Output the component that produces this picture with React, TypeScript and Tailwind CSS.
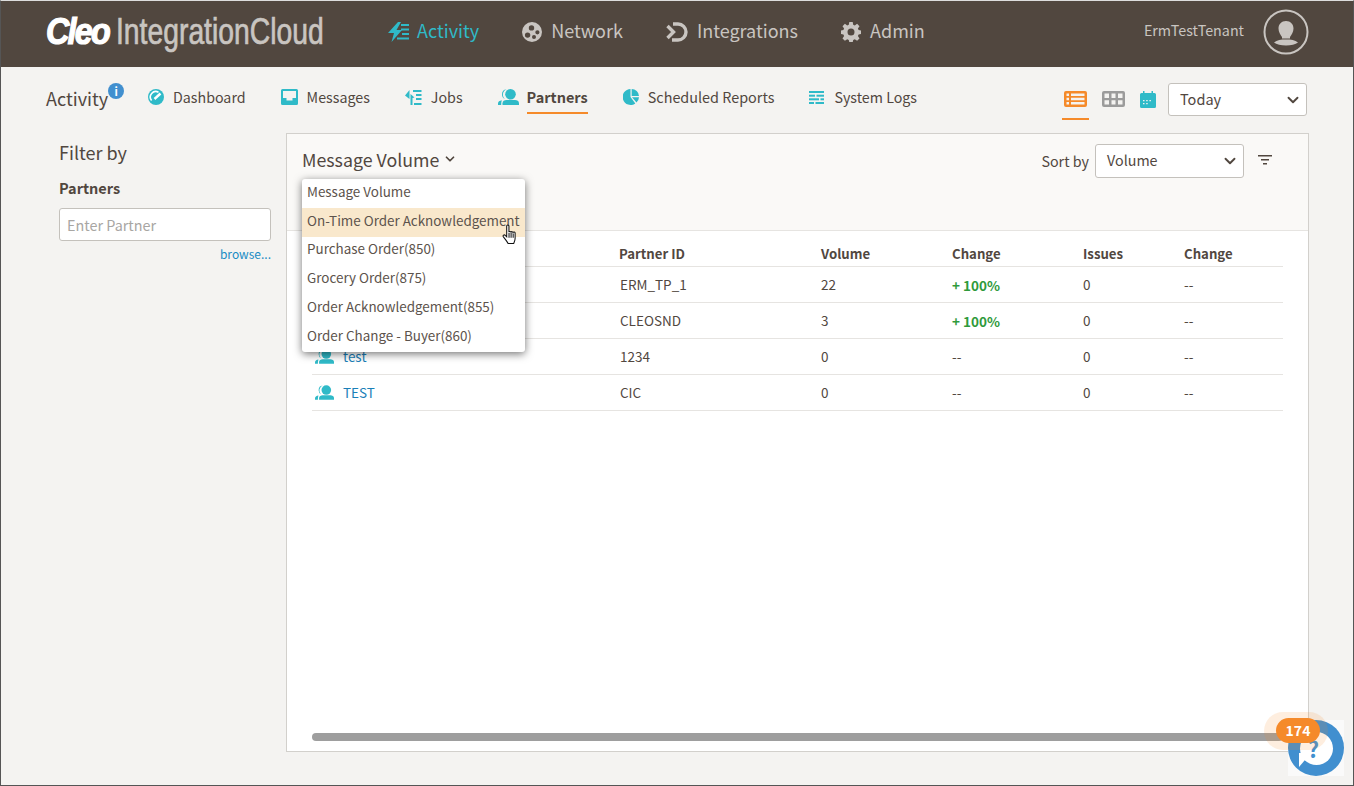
import React from 'react';
import { ChevronDown } from 'lucide-react';

const FONT = "font-['Noto_Sans_CJK_SC','Noto_Sans',sans-serif]";

const ActivityIcon = ({ className }: { className?: string }) => (
    <svg viewBox="0 0 21 20" className={className} fill="currentColor">
        <path d="M10 0 L0 11 H6 L3.500 20 L14 8 H8.500 L13 0 Z" />
        <rect x="13" y="2" width="8" height="2" />
        <rect x="13" y="6.500" width="8" height="2" />
        <rect x="14" y="11" width="7" height="2" />
        <rect x="9" y="15.500" width="12" height="2" />
    </svg>
);

const NetworkIcon = () => (
    <svg viewBox="0 0 20 20" className="w-5 h-5" fill="currentColor">
        <path fillRule="evenodd" d="M10 0a10 10 0 1 0 0 20 10 10 0 0 0 0-20ZM9.500 3.200a2.700 2.700 0 1 1 0 5.400 2.700 2.700 0 0 1 0-5.400ZM5.600 10.400a2.700 2.700 0 1 1 0 5.400 2.700 2.700 0 0 1 0-5.400ZM15.400 8.200a2.100 2.100 0 1 1 0 4.200 2.100 2.100 0 0 1 0-4.200ZM12 13a2 2 0 1 1 0 4 2 2 0 0 1 0-4Z" />
    </svg>
);

const IntegrationsIcon = () => (
    <svg viewBox="0 0 22 20" className="w-[22px] h-5" fill="none" stroke="currentColor" strokeWidth="3.400">
        <path d="M1.500 4 L7.500 10 L1.500 16" />
        <path d="M7 2 H12 A8 8 0 0 1 12 18 H6" />
    </svg>
);

const GearIcon = () => (
    <svg viewBox="0 0 20 20" className="w-5 h-5" fill="currentColor">
        <path fillRule="evenodd" d="M8.300 0h3.400l.5 2.700 1.600.7 2.300-1.600 2.400 2.400-1.600 2.300.7 1.600 2.400.5v3.400l-2.400.5-.7 1.600 1.600 2.300-2.400 2.400-2.300-1.600-1.600.7-.5 2.400H8.300l-.5-2.400-1.600-.7-2.300 1.600-2.400-2.400 1.600-2.300-.7-1.600-2.400-.5V8.600l2.400-.5.7-1.600-1.600-2.300 2.400-2.400 2.300 1.600 1.600-.7ZM10 6.500a3.500 3.500 0 1 0 0 7 3.500 3.500 0 0 0 0-7Z" />
    </svg>
);

const DashboardIcon = () => (
    <svg viewBox="0 0 16 16" className="w-4 h-4">
        <circle cx="8" cy="8" r="8" fill="currentColor" />
        <path d="M3.600 11.500 A5.500 5.500 0 0 1 10.500 3.200" fill="none" stroke="#fff" strokeWidth="1.600" />
        <path d="M6.500 10 L12.500 4.500" fill="none" stroke="#fff" strokeWidth="2.400" />
    </svg>
);

const InboxIcon = () => (
    <svg viewBox="0 0 17 16" className="w-[17px] h-4" fill="currentColor">
        <path fillRule="evenodd" d="M1.500 0h14A1.500 1.500 0 0 1 17 1.500v13a1.500 1.500 0 0 1-1.500 1.500h-14A1.500 1.500 0 0 1 0 14.500v-13A1.500 1.500 0 0 1 1.500 0ZM2 2v7h3.500v2.500h6V9H15V2Z" />
    </svg>
);

const JobsIcon = () => (
    <svg viewBox="0 0 17 17" className="w-[17px] h-[17px]" fill="currentColor">
        <path d="M4.500 1v9L0 6.500Z" />
        <path d="M5.500 5 L9.500 8.500 L7.500 9 V16 H5.500 Z" />
        <rect x="8" y="1" width="8.500" height="2" />
        <rect x="11" y="5" width="5.500" height="2" />
        <rect x="11" y="9" width="5.500" height="2" />
        <rect x="9" y="14" width="7.500" height="2" />
    </svg>
);

const PartnerIcon = ({ className }: { className?: string }) => (
    <svg viewBox="0 0 21 16" className={className} fill="currentColor">
        <circle cx="12.500" cy="5.300" r="5.300" />
        <path d="M8.500 0.300a5.800 5.800 0 0 0-1.500 9.800A5.200 5.200 0 0 1 4 5.200a5 5 0 0 1 4.500-4.900Z" />
        <path d="M4.500 16v-1.800C4.500 12 6.500 11 8.500 11h8.500c2 0 4 1 4 3.200V16Z" />
        <path d="M0 16v-1.500c0-1.800 1.500-3 3.800-3.300-.5 1.300-.6 3-.6 4.800Z" />
    </svg>
);

const PieIcon = () => (
    <svg viewBox="0 0 16 16" className="w-4 h-4" fill="currentColor">
        <path d="M7.500 0v8l4.800 6.500A8 8 0 1 1 7.500 0Z" />
        <path d="M8.700 0a7.500 7.500 0 0 1 7.300 7H8.700Z" />
        <path d="M9 8.300h7a8 8 0 0 1-2.500 5.300Z" />
    </svg>
);

const LogsIcon = () => (
    <svg viewBox="0 0 15 13" className="w-[15px] h-[13px]" fill="currentColor">
        <rect x="0" y="0" width="15" height="2" />
        <rect x="0" y="3.700" width="6" height="2" />
        <rect x="7.500" y="3.700" width="7.500" height="2" />
        <rect x="0" y="7.300" width="10" height="2" />
        <rect x="11.500" y="7.300" width="3.500" height="2" />
        <rect x="0" y="11" width="5" height="2" />
        <rect x="6.500" y="11" width="8.500" height="2" />
    </svg>
);

const ListViewIcon = () => (
    <svg viewBox="0 0 23 16" className="w-[23px] h-4 text-[#f58a2a]" fill="currentColor">
        <path fillRule="evenodd" d="M2 0h19a2 2 0 0 1 2 2v12a2 2 0 0 1-2 2H2a2 2 0 0 1-2-2V2a2 2 0 0 1 2-2Zm.5 2.500V5H5V2.500Zm4.500 0V5h13.500V2.500ZM2.500 6.750v2.500H5v-2.500Zm4.500 0v2.500h13.500v-2.500ZM2.500 11v2.500H5V11ZM7 11v2.500h13.500V11Z" />
    </svg>
);

const GridViewIcon = () => (
    <svg viewBox="0 0 23 16" className="w-[23px] h-4 text-[#9b9b9b]" fill="currentColor">
        <path fillRule="evenodd" d="M2 0h19a2 2 0 0 1 2 2v12a2 2 0 0 1-2 2H2a2 2 0 0 1-2-2V2a2 2 0 0 1 2-2Zm.5 2.500V7H7V2.500Zm7 0V7h4V2.500Zm6.500 0V7h4.500V2.500ZM2.500 9.300v4.200H7V9.300Zm7 0v4.200h4V9.300Zm6.500 0v4.200h4.500V9.300Z" />
    </svg>
);

const CalendarIcon = () => (
    <svg viewBox="0 0 16 17" className="w-4 h-[17px] text-[#2fbac8]" fill="currentColor">
        <path fillRule="evenodd" d="M3 0h1.500v2h7V0H13v2h1.500A1.500 1.500 0 0 1 16 3.500v12a1.500 1.500 0 0 1-1.500 1.500h-13A1.500 1.500 0 0 1 0 15.500v-12A1.500 1.500 0 0 1 1.500 2H3ZM3 9v1.200h1.500V9Zm3.200 0v1.200h1.500V9Zm3.200 0v1.200h1.500V9ZM3 12v1.200h1.500V12Zm3.200 0v1.200h1.500V12Z" />
    </svg>
);

const UserAvatar = () => (
    <svg viewBox="0 0 46 46" className="w-[46px] h-[46px] text-[#c9c5c1]" fill="currentColor">
        <circle cx="23" cy="23" r="21.500" fill="none" stroke="currentColor" strokeWidth="2" />
        <path d="M23 12c4.500 0 7.500 3.300 7.500 7.500 0 3.500-2 6.500-3.500 8.500v1.500H19V28c-1.500-2-3.500-5-3.500-8.500C15.500 15.300 18.500 12 23 12Z" />
        <path d="M11 33.500c3-2.500 7-3 12-3s9 .5 12 3c-2.500 2-7 3-12 3s-9.500-1-12-3Z" />
    </svg>
);

const HandCursor = () => (
    <svg viewBox="0 0 16 22" className="w-[15px] h-[21px]" fill="#fff" stroke="#111" strokeWidth="1.100">
        <path d="M5 2a1.200 1.200 0 0 1 2.400 0v6.500a1.200 1.200 0 0 1 2.200 0 1.200 1.200 0 0 1 2.200.4 1.200 1.200 0 0 1 2.200.6V15c0 2.500-1 4-1.500 5.500H6.500C5.500 18.500 3.500 16 1.500 13.500c-1-1.500.8-2.800 2-1.500L5 13.500Z" />
        <path d="M7.500 9.500v5M9.700 9.500v5M11.900 10v4.500" fill="none" />
    </svg>
);

const MAIN_NAV = [
    { label: 'Network', icon: <NetworkIcon /> },
    { label: 'Integrations', icon: <IntegrationsIcon /> },
    { label: 'Admin', icon: <GearIcon /> },
];

const SUB_NAV = [
    { label: 'Dashboard', icon: <DashboardIcon />, mr: 'mr-[35px]' },
    { label: 'Messages', icon: <InboxIcon />, mr: 'mr-[35px]' },
    { label: 'Jobs', icon: <JobsIcon />, mr: 'mr-[35px]' },
];

const ROWS = [
    { name: '', id: 'ERM_TP_1', volume: '22', change: '+ 100%', issues: '0', issueChange: '--' },
    { name: '', id: 'CLEOSND', volume: '3', change: '+ 100%', issues: '0', issueChange: '--' },
    { name: 'test', id: '1234', volume: '0', change: '--', issues: '0', issueChange: '--' },
    { name: 'TEST', id: 'CIC', volume: '0', change: '--', issues: '0', issueChange: '--' },
];

const MENU_ITEMS = [
    'Message Volume',
    'On-Time Order Acknowledgement',
    'Purchase Order(850)',
    'Grocery Order(875)',
    'Order Acknowledgement(855)',
    'Order Change - Buyer(860)',
];

const COLS = 'grid grid-cols-[308px_201px_131px_131px_101px_1fr]';

export default function App() {
    return (
        <div className={`${FONT} relative w-[1354px] h-[786px] overflow-hidden flex flex-col bg-[#f4f3f1] border-x border-b border-[#555] border-t border-t-[#ddd] text-[#51473f]`}>
            {/* Header */}
            <header className="h-[66px] shrink-0 bg-[#51473f] flex items-center pl-[45px] pr-[44px] pb-[5px] text-[#c9c5c1]">
                <div className="w-[342px] flex items-baseline whitespace-nowrap">
                    <span className="w-[72px] inline-block font-['Liberation_Sans'] font-bold italic text-[36px] leading-none tracking-[-2px] text-white origin-left scale-x-[0.9] [-webkit-text-stroke:1.2px_#fff]">Cleo</span>
                    <span className="inline-block font-['Liberation_Sans'] text-[37px] leading-none text-[#c9c5c1] origin-left scale-x-[0.765] [-webkit-text-stroke:0.7px_#c9c5c1]">IntegrationCloud</span>
                </div>
                <nav className="flex items-center gap-[43px] text-[18px] leading-none">
                    <div className="flex items-center gap-2 text-[#2fbac8]">
                        <ActivityIcon className="w-[21px] h-5" />
                        <span className="pb-[3px]">Activity</span>
                    </div>
                    {MAIN_NAV.map(item => (
                        <div key={item.label} className="flex items-center gap-[9px]">
                            {item.icon}
                            <span className="pb-[3px]">{item.label}</span>
                        </div>
                    ))}
                </nav>
                <div className="ml-auto flex items-center gap-[19px]">
                    <span className="text-[14.300px] pb-[3px]">ErmTestTenant</span>
                    <UserAvatar />
                </div>
            </header>

            {/* Sub navigation */}
            <div className="h-[66px] shrink-0 flex pl-[45px] pr-[46px]">
                <div className="flex items-start pt-[19px] w-[102px]">
                    <span className="text-[18px] leading-[24px]">Activity</span>
                    <span className="w-4 h-4 -mt-[3px] rounded-full bg-[#418fcf] text-white text-[11px] font-bold leading-4 text-center">i</span>
                </div>
                <nav className="flex items-start text-[14.250px] leading-[20px] pt-[20px]">
                    {SUB_NAV.map(item => (
                        <div key={item.label} className={`flex items-center gap-[9px] ${item.mr} text-[#2fbac8]`}>
                            {item.icon}
                            <span className="text-[#51473f]">{item.label}</span>
                        </div>
                    ))}
                    <div className="flex items-center gap-2 mr-[35px] text-[#2fbac8]">
                        <PartnerIcon className="w-[21px] h-4" />
                        <span className="font-bold text-[14.500px] text-[#51473f] border-b-2 border-[#f58a2a] h-[27px] -mb-[7px] leading-[20px]">Partners</span>
                    </div>
                    <div className="flex items-center gap-[9px] mr-[35px] text-[#2fbac8]">
                        <PieIcon />
                        <span className="text-[14.400px] text-[#51473f]">Scheduled Reports</span>
                    </div>
                    <div className="flex items-center gap-[10px] text-[#2fbac8]">
                        <LogsIcon />
                        <span className="text-[#51473f]">System Logs</span>
                    </div>
                </nav>
                <div className="ml-auto flex items-start pt-[16px]">
                    <div className="flex flex-col items-center w-[27px] h-[37px] border-b-2 border-[#f58a2a] pt-[8px]">
                        <ListViewIcon />
                    </div>
                    <div className="ml-[13px] pt-[8px]"><GridViewIcon /></div>
                    <div className="ml-[15px] pt-[8px]"><CalendarIcon /></div>
                    <div className="ml-[12px] w-[139px] h-[33px] bg-white border border-[#c4c1bc] rounded-[3px] flex items-center justify-between pl-[11px] pr-[4px] text-[14.500px]">
                        <span className="pb-[2px]">Today</span>
                        <ChevronDown className="w-[18px] h-[18px]" strokeWidth={2.500} />
                    </div>
                </div>
            </div>

            {/* Body */}
            <div className="flex-1 flex pl-[58px] pr-[44px] pb-[33px] min-h-0">
                <aside className="w-[212px] shrink-0 pt-[6px]">
                    <h2 className="text-[18px] leading-[26px]">Filter by</h2>
                    <div className="mt-[13px] text-[14.500px] leading-[20px] font-bold">Partners</div>
                    <div className="mt-[10px] h-[33px] bg-white border border-[#c4c1bc] rounded-[3px] flex items-center pl-[7px] text-[14.400px] text-[#a8a6a3]">Enter Partner</div>
                    <div className="mt-[4px] text-right text-[12px] leading-[18px] text-[#1a8cc4]">browse...</div>
                </aside>

                <main className="ml-[15px] flex-1 flex flex-col bg-white border border-[#d2d0cc] min-w-0">
                    <div className="h-[97px] shrink-0 bg-[#faf9f7] border-b border-[#e6e4e1] flex items-start justify-between pl-[15px] pr-[36px] pt-[10px]">
                        <div className="flex items-center gap-1 text-[17.800px] leading-[30px]">
                            <span>Message Volume</span>
                            <ChevronDown className="w-[14px] h-[14px]" strokeWidth={3} />
                        </div>
                        <div className="flex items-center gap-[6px] text-[14.300px] leading-[20px]">
                            <span>Sort by</span>
                            <div className="w-[149px] h-[34px] bg-white border border-[#c4c1bc] rounded-[3px] flex items-center justify-between pl-[11px] pr-[4px]">
                                <span className="pb-[2px]">Volume</span>
                                <ChevronDown className="w-[18px] h-[18px]" strokeWidth={2.500} />
                            </div>
                            <svg viewBox="0 0 14 10" className="w-[14px] h-[10px] ml-2 -mt-[2px]" fill="currentColor">
                                <rect x="0" y="0" width="14" height="1.500" />
                                <rect x="3" y="4" width="8" height="1.500" />
                                <rect x="5" y="8" width="4" height="1.500" />
                            </svg>
                        </div>
                    </div>

                    <div className="flex-1 flex flex-col px-[25px] min-h-0">
                        <div className={`${COLS} h-[36px] items-center text-[13.200px] font-semibold border-b border-[#e6e4e1] pt-[10px]`}>
                            <span />
                            <span className="-ml-px">Partner ID</span>
                            <span>Volume</span>
                            <span>Change</span>
                            <span>Issues</span>
                            <span>Change</span>
                        </div>
                        {ROWS.map(row => (
                            <div key={row.id} className={`${COLS} h-[36px] items-center text-[13.500px] border-b border-[#e6e4e1]`}>
                                <div className="flex items-center gap-[9px] pl-[3px]">
                                    <PartnerIcon className="w-[19px] h-[15px] text-[#2fbac8]" />
                                    <span className="text-[#1a7fb8]">{row.name}</span>
                                </div>
                                <span>{row.id}</span>
                                <span>{row.volume}</span>
                                <span className={row.change === '--' ? '' : 'font-bold text-[#2f9a3c] pt-[2px]'}>{row.change}</span>
                                <span>{row.issues}</span>
                                <span>{row.issueChange}</span>
                            </div>
                        ))}
                        <div className="mt-auto mb-[10px] h-2 rounded-full bg-[#9e9e9e]" />
                    </div>
                </main>
            </div>

            {/* Dropdown menu */}
            <div className="absolute left-[301px] top-[178px] w-[223px] bg-white rounded-[3px] shadow-[0_2px_8px_rgba(0,0,0,0.55)] text-[13.430px] text-[#5c534c]">
                {MENU_ITEMS.map((item, i) => (
                    <div key={item} className={`h-[28.800px] flex items-center pl-[5px] pb-[5px] whitespace-nowrap ${i === 1 ? 'bg-[#f9e8cc]' : ''}`}>{item}</div>
                ))}
            </div>
            <div className="absolute left-[501px] top-[223px]"><HandCursor /></div>

            {/* Help widget */}
            <div className="absolute left-[1287px] top-[719px] w-14 h-14 bg-[#fafafa] flex items-center justify-center">
                <div className="w-14 h-14 rounded-full bg-[#418fcf] flex items-center justify-center">
                    <div className="relative w-[33px] h-[33px] rounded-full bg-white flex items-center justify-center pr-[5px] text-[#418fcf] text-[22px] font-bold leading-none">
                        ?
                        <span className="absolute -left-[1px] bottom-[-2px] w-0 h-0 border-t-[14px] border-t-white border-r-[12px] border-r-transparent" />
                    </div>
                </div>
            </div>
            <div className="absolute left-[1263px] top-[711px] w-[64px] h-[38px] rounded-full bg-[#f58a2a]/15" />
            <div className="absolute left-[1275px] top-[717px] w-[44px] h-[25px] rounded-full bg-[#f58a2a] text-white text-[14px] font-semibold flex items-center justify-center">174</div>
        </div>
    );
}
